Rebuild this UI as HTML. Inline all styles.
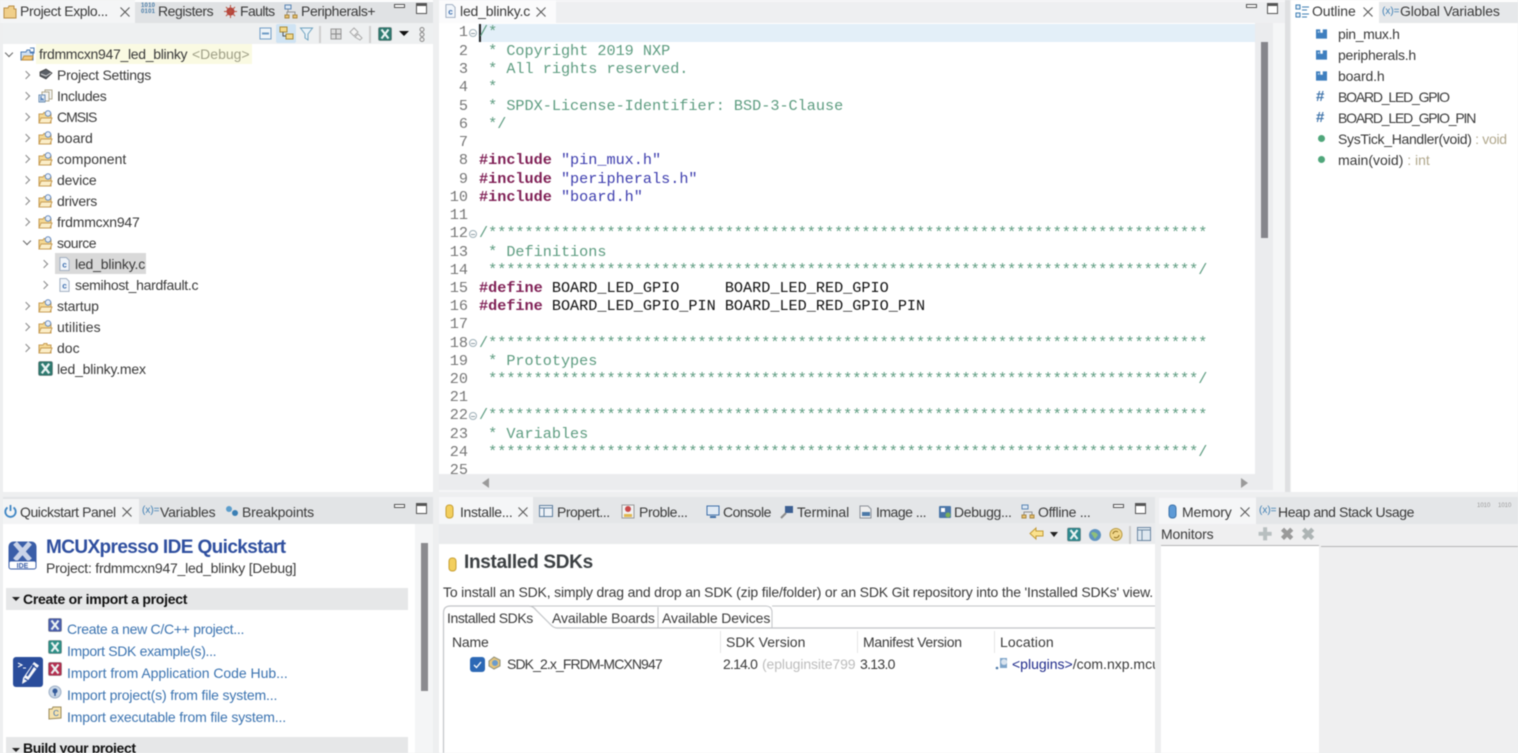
<!DOCTYPE html>
<html lang="en">
<head>
<meta charset="utf-8">
<title>MCUXpresso IDE</title>
<style>
html,body{margin:0;padding:0;background:#eeeff0;}
body{width:1518px;height:753px;overflow:hidden;position:relative;font-family:"Liberation Sans",sans-serif;color:#333;}
#w{position:absolute;left:0;top:0;width:1518px;height:753px;overflow:hidden;filter:blur(.4px);}
.b{position:absolute;}
.t{position:absolute;white-space:nowrap;font-size:14px;line-height:18px;color:#3a3a3a;}
.l{color:#3b73b0;}
.g{color:#b0a78c;}
.m{position:absolute;white-space:pre;font-family:"Liberation Mono",monospace;font-size:15.18px;line-height:18px;color:#111;left:479px;}
.c{color:#5d9c80;}
.k{color:#7f1f55;font-weight:bold;}
.s{color:#3d3dae;}
.n{position:absolute;width:26px;left:442px;text-align:right;font-family:"Liberation Mono",monospace;font-size:15.18px;line-height:18px;color:#777;}
.f{position:absolute;left:469px;width:6px;height:6px;border:1px solid #9fb0b8;border-radius:50%;}
.f:after{content:"";position:absolute;left:1px;top:2.500px;width:4px;height:1px;background:#8c9ca5;}
svg.i{position:absolute;overflow:visible;}
.ch{position:absolute;width:5px;height:5px;border-top:1.3px solid #8a8a8a;border-right:1.3px solid #8a8a8a;transform:rotate(45deg);}
.cd{position:absolute;width:5px;height:5px;border-bottom:1.3px solid #666;border-right:1.3px solid #666;transform:rotate(45deg);}
</style>
</head>
<body>
<div id="w">
<svg width="0" height="0" style="position:absolute">
<defs>
<symbol id="fo" viewBox="0 0 15 14"><path d="M1 13V4h4l1-1.500h3V4h4v9z" fill="#f4d894" stroke="#c79d55"/><path d="M1 13l2-5h11l-2 5z" fill="#fbeec8" stroke="#c79d55"/><circle cx="10" cy="3.500" r="2.800" fill="#e6eef8" stroke="#5b82b8" stroke-width=".9"/></symbol>
<symbol id="fd" viewBox="0 0 15 14"><path d="M1 12V4h4l1-1.500h3V4h4v8z" fill="#f4d894" stroke="#c79d55"/><path d="M1 12l2-5h11l-2 5z" fill="#fbeec8" stroke="#c79d55"/></symbol>
<symbol id="xb" viewBox="0 0 14 14"><rect x=".5" y=".5" width="13" height="13" rx="1.500" fill="currentColor" stroke="#333" stroke-opacity=".3"/><path d="M3.500 2.500L10.500 11.500M10.500 2.500L3.500 11.500" stroke="#e9f2f2" stroke-width="2.200"/></symbol>
<symbol id="cf" viewBox="0 0 12 15"><path d="M1 .5h7l3 3v11H1z" fill="#f1f5fa" stroke="#9aa9bd"/><text x="6" y="11.500" font-size="9" font-family="Liberation Sans" font-weight="bold" text-anchor="middle" fill="#3c6eaf">c</text></symbol>
<symbol id="inc" viewBox="0 0 13 11"><path d="M0 0h5v4h3v-4h5v11H0z" fill="#3f7fbf"/><rect x="2" y="2" width="2" height="2" fill="#a9cbe8"/></symbol>
<symbol id="cl" viewBox="0 0 10 10"><path d="M.5 .5L9.500 9.500M9.500 .5L.5 9.500" stroke="#555" stroke-width="1" fill="none"/></symbol>
</defs>
</svg>

<!-- TOP LEFT PANEL -->
<div class="b" style="left:3px;top:0;width:430px;height:492px;background:#fff"></div>
<div class="b" style="left:3px;top:2px;width:430px;height:21px;background:#e0e2e4"></div>
<div class="b" style="left:0;top:0;width:135px;height:23px;background:#f4f5f6"></div>
<div class="b" style="left:3px;top:23px;width:430px;height:21px;background:#eef0f1"></div>
<svg class="i" style="left:3px;top:5px" width="14" height="14" viewBox="0 0 14 14"><path d="M1 13V3h4l1-2h5v3h2v9z" fill="#f0cf8a" stroke="#b98e46"/></svg>
<span class="t" style="left:20px;top:2px;letter-spacing:-.4px">Project Explo...</span>
<svg class="i" style="left:120px;top:7px" width="10" height="10"><use href="#cl"/></svg>
<span class="t" style="left:141px;top:3px;font-size:6px;line-height:6px;color:#4a7da8;font-weight:bold;letter-spacing:.2px;white-space:pre">1010
0101</span>
<span class="t" style="left:158px;top:2px;letter-spacing:-.44px">Registers</span>
<svg class="i" style="left:224px;top:5px" width="13" height="13" viewBox="0 0 13 13"><circle cx="6.500" cy="6.500" r="4" fill="#b53a3a"/><path d="M6.500 0v13M0 6.500h13M2 2l9 9M11 2l-9 9" stroke="#b7513e" stroke-width="1"/></svg>
<span class="t" style="left:240px;top:2px;letter-spacing:-.6px">Faults</span>
<svg class="i" style="left:284px;top:4px" width="14" height="15" viewBox="0 0 14 15"><rect x="1" y="1" width="6" height="4" fill="#dce7f3" stroke="#5b85b3"/><path d="M4 5v3M3 11V8h8v3" stroke="#8f8f8f" fill="none"/><rect x="1" y="11" width="4" height="3" fill="#e8c170" stroke="#a98740"/><rect x="9" y="11" width="4" height="3" fill="#e8c170" stroke="#a98740"/></svg>
<span class="t" style="left:301px;top:2px;letter-spacing:-.4px">Peripherals+</span>
<div class="b" style="left:394px;top:4px;width:9px;height:2px;border:1.5px solid #555;background:#fff"></div>
<div class="b" style="left:416px;top:3px;width:9px;height:7px;border:1.5px solid #555;border-top-width:3px;background:#fff"></div>
<!-- toolbar -->
<div class="b" style="left:276px;top:24px;width:20px;height:19px;background:#cfe3f3;border-radius:2px"></div>
<svg class="i" style="left:259px;top:27px" width="14" height="14" viewBox="0 0 14 14"><rect x="1" y="1" width="11" height="11" fill="#eef3f8" stroke="#6f9cc6"/><path d="M3 6.500h7" stroke="#6f9cc6" stroke-width="2"/></svg>
<svg class="i" style="left:279px;top:26px" width="15" height="15" viewBox="0 0 15 15"><rect x="1" y="1" width="7" height="5" fill="#f3d98a" stroke="#a88b38"/><rect x="7" y="8" width="7" height="5" fill="#f3d98a" stroke="#a88b38"/><path d="M4 6v4h3" stroke="#555" fill="none"/></svg>
<svg class="i" style="left:300px;top:27px" width="13" height="14" viewBox="0 0 13 14"><path d="M.5 1h12L8 7v6L5 11V7z" fill="#e8f2f8" stroke="#6fa3c0"/></svg>
<div class="b" style="left:319px;top:26px;width:2px;height:17px;background:#cfcfcf"></div>
<svg class="i" style="left:330px;top:28px" width="12" height="12" viewBox="0 0 12 12"><rect x="1" y="1" width="10" height="10" fill="#ddd" stroke="#999"/><path d="M6 1v10M1 6h10" stroke="#888"/></svg>
<svg class="i" style="left:349px;top:27px" width="14" height="14" viewBox="0 0 14 14"><path d="M1 5l4-4 4 4-4 4zM6 10l3-3 4 4-2 2z" fill="#f4f4f4" stroke="#aaa"/></svg>
<div class="b" style="left:369px;top:26px;width:2px;height:17px;background:#cfcfcf"></div>
<svg class="i" style="left:378px;top:27px;color:#2e7a70" width="14" height="14"><use href="#xb"/></svg>
<div class="b" style="left:399px;top:31px;border:5px solid transparent;border-top:5px solid #111;border-bottom:0"></div>
<svg class="i" style="left:419px;top:27px" width="6" height="15" viewBox="0 0 6 15"><circle cx="3" cy="2.500" r="2" fill="#eee" stroke="#888"/><circle cx="3" cy="7.500" r="2" fill="#eee" stroke="#888"/><circle cx="3" cy="12.500" r="2" fill="#eee" stroke="#888"/></svg>
<!-- tree -->
<div class="b" style="left:36px;top:44px;width:216px;height:20px;background:#fafae2"></div>
<div class="cd" style="left:6px;top:50px"></div>
<svg class="i" style="left:20px;top:47px" width="15" height="14" viewBox="0 0 15 14"><path d="M1 13V5h5l1-2h3v2h3v8z" fill="#cfe0f2" stroke="#4f7db5"/><path d="M2 13l2-4h9l-1 4z" fill="#f2c778" stroke="#bf9040"/><path d="M10 1h4v5h-4" fill="none" stroke="#4f7db5"/></svg>
<span class="t" style="left:39px;top:45px;letter-spacing:-.3px">frdmmcxn947_led_blinky</span>
<span class="t" style="left:192px;top:45px;color:#9f9f86">&lt;Debug&gt;</span>

<div class="ch" style="left:23px;top:72px"></div>
<svg class="i" style="left:39px;top:68px" width="14" height="13" viewBox="0 0 14 13"><path d="M1 4l6-3 6 4-6 6-6-3z" fill="#5a5f66" stroke="#333" stroke-width=".7"/><path d="M2 6l5 2 5-3" stroke="#ddd" fill="none"/></svg>
<span class="t" style="left:57px;top:66px;letter-spacing:-.25px">Project Settings</span>

<div class="ch" style="left:23px;top:93px"></div>
<svg class="i" style="left:38px;top:89px" width="15" height="14" viewBox="0 0 15 14"><rect x="7" y="1" width="7" height="9" fill="#f4f4f4" stroke="#b0a88e"/><rect x="4" y="3" width="7" height="9" fill="#f4f4f4" stroke="#b0a88e"/><rect x="1" y="6" width="6" height="7" fill="#e3ecf6" stroke="#6d8fb3"/><path d="M3 7v5M3 10h2v2" stroke="#3c6eaf" fill="none"/></svg>
<span class="t" style="left:57px;top:87px;letter-spacing:-.35px">Includes</span>

<div class="ch" style="left:23px;top:114px"></div><svg class="i" style="left:38px;top:110px" width="15" height="14"><use href="#fo"/></svg><span class="t" style="left:57px;top:108px;letter-spacing:-1px">CMSIS</span>
<div class="ch" style="left:23px;top:135px"></div><svg class="i" style="left:38px;top:131px" width="15" height="14"><use href="#fo"/></svg><span class="t" style="left:57px;top:129px">board</span>
<div class="ch" style="left:23px;top:156px"></div><svg class="i" style="left:38px;top:152px" width="15" height="14"><use href="#fo"/></svg><span class="t" style="left:57px;top:150px">component</span>
<div class="ch" style="left:23px;top:177px"></div><svg class="i" style="left:38px;top:173px" width="15" height="14"><use href="#fo"/></svg><span class="t" style="left:57px;top:171px;letter-spacing:-.15px">device</span>
<div class="ch" style="left:23px;top:198px"></div><svg class="i" style="left:38px;top:194px" width="15" height="14"><use href="#fo"/></svg><span class="t" style="left:57px;top:192px;letter-spacing:-.3px">drivers</span>
<div class="ch" style="left:23px;top:219px"></div><svg class="i" style="left:38px;top:215px" width="15" height="14"><use href="#fo"/></svg><span class="t" style="left:57px;top:213px;letter-spacing:-.2px">frdmmcxn947</span>
<div class="cd" style="left:24px;top:238px"></div><svg class="i" style="left:38px;top:236px" width="15" height="14"><use href="#fo"/></svg><span class="t" style="left:57px;top:234px;letter-spacing:-.5px">source</span>

<div class="b" style="left:55px;top:253px;width:91px;height:21px;background:#d9d9d9"></div>
<div class="ch" style="left:41px;top:261px"></div><svg class="i" style="left:59px;top:257px" width="11" height="14"><use href="#cf"/></svg><span class="t" style="left:75px;top:255px;letter-spacing:-.17px">led_blinky.c</span>
<div class="ch" style="left:41px;top:282px"></div><svg class="i" style="left:59px;top:278px" width="11" height="14"><use href="#cf"/></svg><span class="t" style="left:75px;top:276px;letter-spacing:-.3px">semihost_hardfault.c</span>

<div class="ch" style="left:23px;top:303px"></div><svg class="i" style="left:38px;top:299px" width="15" height="14"><use href="#fo"/></svg><span class="t" style="left:57px;top:297px;letter-spacing:-.15px">startup</span>
<div class="ch" style="left:23px;top:324px"></div><svg class="i" style="left:38px;top:320px" width="15" height="14"><use href="#fo"/></svg><span class="t" style="left:57px;top:318px;letter-spacing:.1px">utilities</span>
<div class="ch" style="left:23px;top:345px"></div><svg class="i" style="left:38px;top:341px" width="15" height="14"><use href="#fd"/></svg><span class="t" style="left:57px;top:339px">doc</span>
<svg class="i" style="left:38px;top:361px;color:#2e7a70" width="15" height="15"><use href="#xb"/></svg><span class="t" style="left:57px;top:360px;letter-spacing:-.2px">led_blinky.mex</span>

<!-- EDITOR -->
<div class="b" style="left:439px;top:0;width:846px;height:492px;background:#f5f6f7"></div>
<div class="b" style="left:439px;top:2px;width:846px;height:21px;background:#eeeff1"></div>
<div class="b" style="left:439px;top:0;width:117px;height:23px;background:#fbfbfc"></div>
<div class="b" style="left:439px;top:23px;width:816px;height:451px;background:#fff"></div>
<div class="b" style="left:478px;top:24px;width:777px;height:18px;background:#e3eff8"></div>
<div class="b" style="left:1255px;top:23px;width:18px;height:451px;background:#ebecee"></div>
<div class="b" style="left:1261px;top:42px;width:7px;height:196px;background:#86868c"></div>
<div class="b" style="left:439px;top:474px;width:834px;height:16px;background:#ebecee"></div>
<div class="b" style="left:482px;top:478px;border:5px solid transparent;border-right:7px solid #9a9a9a;border-left:0"></div>
<div class="b" style="left:1241px;top:478px;border:5px solid transparent;border-left:7px solid #9a9a9a;border-right:0"></div>
<div class="b" style="left:1285px;top:0;width:5px;height:492px;background:#dfe0e2"></div>
<svg class="i" style="left:445px;top:4px" width="11" height="14"><use href="#cf"/></svg>
<span class="t" style="left:460px;top:2px;letter-spacing:-.17px">led_blinky.c</span>
<svg class="i" style="left:536px;top:7px" width="10" height="10"><use href="#cl"/></svg>
<div class="b" style="left:1246px;top:4px;width:9px;height:2px;border:1.5px solid #555;background:#fff"></div>
<div class="b" style="left:1267px;top:3px;width:9px;height:7px;border:1.5px solid #555;border-top-width:3px;background:#fff"></div>
<div class="b" style="left:479px;top:24px;width:2px;height:18px;background:#222"></div>

<div class="n" style="top:23px">1</div><div class="f" style="top:29px"></div>
<div class="n" style="top:42px">2</div><div class="n" style="top:60px">3</div><div class="n" style="top:78px">4</div><div class="n" style="top:97px">5</div><div class="n" style="top:115px">6</div><div class="n" style="top:133px">7</div><div class="n" style="top:151px">8</div><div class="n" style="top:170px">9</div><div class="n" style="top:188px">10</div><div class="n" style="top:206px">11</div>
<div class="n" style="top:224px">12</div><div class="f" style="top:230px"></div>
<div class="n" style="top:243px">13</div><div class="n" style="top:261px">14</div><div class="n" style="top:279px">15</div><div class="n" style="top:297px">16</div><div class="n" style="top:315px">17</div>
<div class="n" style="top:334px">18</div><div class="f" style="top:339px"></div>
<div class="n" style="top:352px">19</div><div class="n" style="top:370px">20</div><div class="n" style="top:388px">21</div>
<div class="n" style="top:406px">22</div><div class="f" style="top:412px"></div>
<div class="n" style="top:425px">23</div><div class="n" style="top:443px">24</div><div class="n" style="top:461px;height:13px;overflow:hidden">25</div>

<div class="m c" style="top:23px">/*</div>
<div class="m c" style="top:42px"> * Copyright 2019 NXP</div>
<div class="m c" style="top:60px"> * All rights reserved.</div>
<div class="m c" style="top:78px"> *</div>
<div class="m c" style="top:97px"> * SPDX-License-Identifier: BSD-3-Clause</div>
<div class="m c" style="top:115px"> */</div>
<div class="m" style="top:151px"><span class="k">#include</span> <span class="s">"pin_mux.h"</span></div>
<div class="m" style="top:170px"><span class="k">#include</span> <span class="s">"peripherals.h"</span></div>
<div class="m" style="top:188px"><span class="k">#include</span> <span class="s">"board.h"</span></div>
<div class="m c" style="top:224px">/*******************************************************************************</div>
<div class="m c" style="top:243px"> * Definitions</div>
<div class="m c" style="top:261px"> ******************************************************************************/</div>
<div class="m" style="top:279px"><span class="k">#define</span> BOARD_LED_GPIO     BOARD_LED_RED_GPIO</div>
<div class="m" style="top:297px"><span class="k">#define</span> BOARD_LED_GPIO_PIN BOARD_LED_RED_GPIO_PIN</div>
<div class="m c" style="top:334px">/*******************************************************************************</div>
<div class="m c" style="top:352px"> * Prototypes</div>
<div class="m c" style="top:370px"> ******************************************************************************/</div>
<div class="m c" style="top:406px">/*******************************************************************************</div>
<div class="m c" style="top:425px"> * Variables</div>
<div class="m c" style="top:443px"> ******************************************************************************/</div>

<!-- OUTLINE -->
<div class="b" style="left:1291px;top:0;width:227px;height:492px;background:#fff"></div>
<div class="b" style="left:1379px;top:2px;width:139px;height:21px;background:#e6e8ea"></div>
<svg class="i" style="left:1295px;top:4px" width="14" height="14" viewBox="0 0 14 14"><path d="M1 1h4v4H1zM1 9h4v4H1z" fill="#e7f0f8" stroke="#3f7fb4"/><path d="M7 3h7M7 6h5M7 10h7M7 13h5" stroke="#3f7fb4"/></svg>
<span class="t" style="left:1312px;top:2px;letter-spacing:-.1px">Outline</span>
<svg class="i" style="left:1363px;top:7px" width="10" height="10"><use href="#cl"/></svg>
<span class="t" style="left:1382px;top:3px;font-size:10px;color:#3f7fb4">(x)=</span>
<span class="t" style="left:1400px;top:2px;letter-spacing:-.12px">Global Variables</span>
<svg class="i" style="left:1316px;top:29px" width="11" height="10"><use href="#inc"/></svg><span class="t" style="left:1338px;top:25px;letter-spacing:-.33px">pin_mux.h</span>
<svg class="i" style="left:1316px;top:50px" width="11" height="10"><use href="#inc"/></svg><span class="t" style="left:1338px;top:46px;letter-spacing:-.23px">peripherals.h</span>
<svg class="i" style="left:1316px;top:71px" width="11" height="10"><use href="#inc"/></svg><span class="t" style="left:1338px;top:67px;letter-spacing:-.14px">board.h</span>
<span class="t" style="left:1316px;top:88px;font-weight:bold;font-size:15px;color:#3f74ab">#</span><span class="t" style="left:1338px;top:88px;letter-spacing:-1.2px">BOARD_LED_GPIO</span>
<span class="t" style="left:1316px;top:109px;font-weight:bold;font-size:15px;color:#3f74ab">#</span><span class="t" style="left:1338px;top:109px;letter-spacing:-1.2px">BOARD_LED_GPIO_PIN</span>
<div class="b" style="left:1318px;top:135px;width:7px;height:7px;border-radius:50%;background:#4fa67a"></div><span class="t" style="left:1338px;top:130px;letter-spacing:-.32px">SysTick_Handler(void)<span class="g"> : void</span></span>
<div class="b" style="left:1318px;top:156px;width:7px;height:7px;border-radius:50%;background:#4fa67a"></div><span class="t" style="left:1338px;top:151px">main(void)<span class="g"> : int</span></span>

<!-- BOTTOM LEFT -->
<div class="b" style="left:3px;top:497px;width:430px;height:256px;background:#fff"></div>
<div class="b" style="left:3px;top:497px;width:430px;height:27px;background:#e2e4e6"></div>
<div class="b" style="left:3px;top:499px;width:136px;height:25px;background:#f3f4f5"></div>
<div class="b" style="left:415px;top:524px;width:18px;height:229px;background:#f4f5f6"></div>
<div class="b" style="left:421px;top:543px;width:7px;height:148px;background:#8b8b8f"></div>
<svg class="i" style="left:4px;top:504px" width="13" height="14" viewBox="0 0 13 14"><path d="M3.500 3.500a5.200 5.200 0 1 0 6 0" fill="none" stroke="#3f86c4" stroke-width="1.800"/><path d="M6.500 1v6" stroke="#3f86c4" stroke-width="1.800"/></svg>
<span class="t" style="left:20px;top:503px;letter-spacing:-.44px">Quickstart Panel</span>
<svg class="i" style="left:122px;top:507px" width="10" height="10"><use href="#cl"/></svg>
<span class="t" style="left:142px;top:502px;font-size:10px;color:#3f7fb4">(x)=</span>
<span class="t" style="left:160px;top:503px;letter-spacing:-.22px">Variables</span>
<svg class="i" style="left:225px;top:505px" width="14" height="12" viewBox="0 0 14 12"><circle cx="4" cy="4" r="3" fill="#5b9dcc"/><circle cx="10" cy="8" r="3" fill="#3b7fb4"/></svg>
<span class="t" style="left:242px;top:503px;letter-spacing:-.18px">Breakpoints</span>
<div class="b" style="left:394px;top:504px;width:9px;height:2px;border:1.5px solid #555;background:#fff"></div>
<div class="b" style="left:416px;top:503px;width:9px;height:7px;border:1.5px solid #555;border-top-width:3px;background:#fff"></div>

<svg class="i" style="left:8px;top:541px" width="29" height="29" viewBox="0 0 29 29"><rect x=".5" y=".5" width="28" height="28" rx="5" fill="#3a5ea8"/><path d="M7 2l15 17M22 2L7 19" stroke="#c9d3e8" stroke-width="5"/><rect x="1" y="20" width="27" height="8" fill="#fff" rx="2" stroke="#3a5ea8"/><text x="14.500" y="27" font-size="7" font-weight="bold" font-family="Liberation Sans" text-anchor="middle" fill="#3a5ea8">IDE</text></svg>
<span class="t" style="left:46px;top:537px;font-size:19px;line-height:22px;font-weight:bold;color:#2f4f9f;letter-spacing:-.6px">MCUXpresso IDE Quickstart</span>
<span class="t" style="left:46px;top:559px;letter-spacing:-.23px">Project: frdmmcxn947_led_blinky [Debug]</span>
<div class="b" style="left:6px;top:588px;width:402px;height:22px;background:#e6e7e8"></div>
<div class="b" style="left:12px;top:597px;border:4px solid transparent;border-top:4px solid #222;border-bottom:0"></div>
<span class="t" style="left:23px;top:590px;font-weight:bold;color:#111;letter-spacing:-.27px">Create or import a project</span>

<svg class="i" style="left:13px;top:657px" width="30" height="30" viewBox="0 0 30 30"><rect width="30" height="30" rx="3" fill="#2a4d9b"/><path d="M5 6l4 2-4 2M10 11h3" stroke="#fff" fill="none"/><path d="M9 27l1-6L21 5l5 3.500-11 15z" fill="#fff" opacity=".95"/><path d="M11.500 21.500l4 2.500M19 8l5 3.500" stroke="#2a4d9b" stroke-width="1.200"/><path d="M14 19l7-11" stroke="#2a4d9b" stroke-width="2"/></svg>
<svg class="i" style="left:48px;top:618px;color:#4a5fae" width="14" height="14"><use href="#xb"/></svg><span class="t l" style="left:67px;top:620px;letter-spacing:-.28px">Create a new C/C++ project...</span>
<svg class="i" style="left:48px;top:640px;color:#2f9088" width="14" height="14"><use href="#xb"/></svg><span class="t l" style="left:67px;top:642px;letter-spacing:-.33px">Import SDK example(s)...</span>
<svg class="i" style="left:48px;top:662px;color:#b52f50" width="14" height="14"><use href="#xb"/></svg><span class="t l" style="left:67px;top:664px;letter-spacing:-.03px">Import from Application Code Hub...</span>
<svg class="i" style="left:48px;top:685px" width="14" height="14" viewBox="0 0 14 14"><circle cx="7" cy="7" r="6" fill="#c9d6e6" stroke="#9eb0c6"/><circle cx="7" cy="6" r="2.500" fill="#345b9a"/><path d="M7 8v3" stroke="#345b9a" stroke-width="1.500"/></svg><span class="t l" style="left:67px;top:686px;letter-spacing:-.14px">Import project(s) from file system...</span>
<svg class="i" style="left:48px;top:706px" width="15" height="14" viewBox="0 0 15 14"><path d="M1 13V3l3 0 1-2h8v11z" fill="#f5e2ad" stroke="#9c8b5a"/><text x="8" y="10" font-size="8" font-family="Liberation Sans" text-anchor="middle" fill="#3c6eaf">C</text></svg><span class="t l" style="left:67px;top:708px;letter-spacing:-.16px">Import executable from file system...</span>
<div class="b" style="left:6px;top:737px;width:402px;height:16px;background:#e6e7e8"></div>
<div class="b" style="left:12px;top:748px;border:4px solid transparent;border-top:4px solid #222;border-bottom:0"></div>
<span class="t" style="left:23px;top:739px;font-weight:bold;color:#111;letter-spacing:-.4px">Build your project</span>

<!-- BOTTOM MIDDLE -->
<div class="b" style="left:439px;top:497px;width:716px;height:256px;background:#fff"></div>
<div class="b" style="left:439px;top:497px;width:716px;height:47px;background:#eaebed"></div>
<div class="b" style="left:439px;top:497px;width:94px;height:27px;background:#f5f6f7"></div>
<div class="b" style="left:533px;top:497px;width:622px;height:26px;background:#e4e6e8"></div>
<svg class="i" style="left:445px;top:504px" width="9" height="15" viewBox="0 0 9 15"><rect x="1" y="1" width="7" height="13" rx="3" fill="#f3cf5e" stroke="#c79f32"/></svg>
<span class="t" style="left:460px;top:503px;letter-spacing:-.33px">Installe...</span>
<svg class="i" style="left:518px;top:507px" width="10" height="10"><use href="#cl"/></svg>
<svg class="i" style="left:539px;top:505px" width="14" height="12" viewBox="0 0 14 12"><rect x=".5" y=".5" width="13" height="11" fill="#eef2f7" stroke="#5f7f9f"/><path d="M1 3h12M5 3v8" stroke="#5f7f9f"/></svg>
<span class="t" style="left:557px;top:503px;letter-spacing:-.5px">Propert...</span>
<svg class="i" style="left:621px;top:504px" width="14" height="15" viewBox="0 0 14 15"><rect x="1" y="1" width="12" height="13" fill="#f2f2f2" stroke="#999"/><circle cx="7" cy="5" r="3" fill="#c94a4a"/><rect x="3" y="10" width="8" height="3" fill="#e0b84f"/></svg>
<span class="t" style="left:639px;top:503px;letter-spacing:-.4px">Proble...</span>
<svg class="i" style="left:706px;top:505px" width="14" height="13" viewBox="0 0 14 13"><rect x="1" y="1" width="12" height="9" fill="#dfe9f4" stroke="#3f6fa8"/><path d="M4 12h6" stroke="#3f6fa8" stroke-width="2"/></svg>
<span class="t" style="left:723px;top:503px;letter-spacing:-.5px">Console</span>
<svg class="i" style="left:780px;top:505px" width="14" height="14" viewBox="0 0 14 14"><rect x="5" y="1" width="8" height="7" fill="#3c5f92"/><path d="M1 13l5-5" stroke="#8a8a8a" stroke-width="2"/></svg>
<span class="t" style="left:797px;top:503px;letter-spacing:-.1px">Terminal</span>
<svg class="i" style="left:859px;top:505px" width="14" height="14" viewBox="0 0 14 14"><path d="M1 1h8l3 3v9H1z" fill="#eee" stroke="#8a8f96"/><rect x="3" y="7" width="8" height="4" fill="#4d79a8"/></svg>
<span class="t" style="left:876px;top:503px;letter-spacing:-.5px">Image ...</span>
<svg class="i" style="left:938px;top:505px" width="14" height="14" viewBox="0 0 14 14"><rect x="1" y="1" width="12" height="12" rx="1" fill="#4a76a8"/><rect x="3" y="3" width="4" height="4" fill="#fff"/><circle cx="10" cy="10" r="2.500" fill="#7bb05a"/></svg>
<span class="t" style="left:954px;top:503px;letter-spacing:-.35px">Debugg...</span>
<svg class="i" style="left:1021px;top:504px" width="14" height="15" viewBox="0 0 14 15"><rect x="1" y="1" width="6" height="4" fill="#dce7f3" stroke="#5b85b3"/><path d="M3 11V8h8v3" stroke="#8f8f8f" fill="none"/><rect x="1" y="11" width="4" height="3" fill="#e8c170" stroke="#a98740"/><rect x="9" y="11" width="4" height="3" fill="#e8c170" stroke="#a98740"/></svg>
<span class="t" style="left:1038px;top:503px;letter-spacing:-.3px">Offline ...</span>
<div class="b" style="left:1113px;top:504px;width:9px;height:2px;border:1.5px solid #555;background:#fff"></div>
<div class="b" style="left:1135px;top:503px;width:9px;height:7px;border:1.5px solid #555;border-top-width:3px;background:#fff"></div>
<!-- toolbar -->
<svg class="i" style="left:1029px;top:527px" width="15" height="13" viewBox="0 0 15 13"><path d="M1 6.500L7 1v3h7v5H7v3z" fill="#fbe28e" stroke="#c39a35"/></svg>
<div class="b" style="left:1050px;top:532px;border:4.500px solid transparent;border-top:5px solid #222;border-bottom:0"></div>
<svg class="i" style="left:1067px;top:527px;color:#2e8a90" width="14" height="15"><use href="#xb"/></svg>
<svg class="i" style="left:1088px;top:528px" width="14" height="14" viewBox="0 0 14 14"><circle cx="7" cy="7" r="6" fill="#5f93bf"/><path d="M3 5c2-2 5-1 7 2l-3 4z" fill="#8fbf7a"/></svg>
<svg class="i" style="left:1109px;top:527px" width="14" height="15" viewBox="0 0 14 15"><circle cx="7" cy="7.500" r="6" fill="#f1d78b" stroke="#b99a40"/><path d="M4 7a3 3 0 0 1 5-2M10 8a3 3 0 0 1-5 2" stroke="#8d6e1f" fill="none"/></svg>
<div class="b" style="left:1129px;top:526px;width:2px;height:18px;background:#cfcfcf"></div>
<svg class="i" style="left:1137px;top:527px" width="14" height="14" viewBox="0 0 14 14"><rect x=".5" y=".5" width="13" height="13" fill="#dfe8f0" stroke="#6b87a3"/><path d="M1 3h12M5 3v10" stroke="#6b87a3"/></svg>

<svg class="i" style="left:447px;top:555px" width="11" height="17" viewBox="0 0 11 17"><rect x="2" y="3" width="7" height="13" rx="3" fill="#f3cf5e" stroke="#c79f32"/></svg>
<span class="t" style="left:464px;top:552px;font-size:19px;line-height:22px;font-weight:bold;color:#3c4043;letter-spacing:-.3px">Installed SDKs</span>
<span class="t" style="left:443px;top:583px;letter-spacing:-.17px">To install an SDK, simply drag and drop an SDK (zip file/folder) or an SDK Git repository into the 'Installed SDKs' view.</span>
<svg class="i" style="left:443px;top:604px" width="712" height="149" viewBox="0 0 712 149"><path d="M.5 149V9q0-7 7-7H86q4 0 7 4l15 15q3 3 6 3H712" fill="none" stroke="#c2c4c7" stroke-width="1.200"/><path d="M86 2H323q5 0 6 5V24M215 3V24M712 2H329" fill="none" stroke="#c2c4c7"/></svg>
<span class="t" style="left:447px;top:609px;letter-spacing:-.43px">Installed SDKs</span>
<span class="t" style="left:552px;top:609px;letter-spacing:-.13px">Available Boards</span>
<span class="t" style="left:662px;top:609px;letter-spacing:-.12px">Available Devices</span>
<span class="t" style="left:452px;top:633px;letter-spacing:-.2px">Name</span>
<div class="b" style="left:720px;top:631px;width:1px;height:22px;background:#e6e6e6"></div>
<span class="t" style="left:726px;top:633px">SDK Version</span>
<div class="b" style="left:857px;top:631px;width:1px;height:22px;background:#e6e6e6"></div>
<span class="t" style="left:863px;top:633px;letter-spacing:-.3px">Manifest Version</span>
<div class="b" style="left:994px;top:631px;width:1px;height:22px;background:#e6e6e6"></div>
<span class="t" style="left:1000px;top:633px;letter-spacing:.1px">Location</span>
<div class="b" style="left:470px;top:657px;width:15px;height:15px;background:#2c68b5;border-radius:3px"></div>
<svg class="i" style="left:470px;top:657px" width="15" height="15" viewBox="0 0 15 15"><path d="M4 8l2.500 2.500L11 5" fill="none" stroke="#fff" stroke-width="1.300"/></svg>
<svg class="i" style="left:488px;top:656px" width="14" height="14" viewBox="0 0 14 14"><path d="M1 5l5-4 6 3v6l-6 3-5-3z" fill="#e8c67a" stroke="#8f8f7a"/><circle cx="7" cy="7" r="3" fill="#6b9bcc"/></svg>
<span class="t" style="left:507px;top:655px;letter-spacing:-.9px">SDK_2.x_FRDM-MCXN947</span>
<span class="t" style="left:723px;top:655px;letter-spacing:-.8px">2.14.0</span>
<span class="t" style="left:762px;top:655px;color:#bdbdbd;letter-spacing:-.1px">(epluginsite799</span>
<span class="t" style="left:860px;top:655px;letter-spacing:-.7px">3.13.0</span>
<svg class="i" style="left:995px;top:656px" width="14" height="14" viewBox="0 0 14 14"><path d="M5 2h7v10H5z" fill="#7ea4c9"/><circle cx="9" cy="6" r="3" fill="#d8e3ee"/><circle cx="2" cy="12" r="1.300" fill="#4d79a8"/></svg>
<div class="t" style="left:1012px;top:655px;width:143px;overflow:hidden"><span style="color:#1e2a8a">&lt;plugins&gt;</span>/com.nxp.mcuxpresso</div>

<!-- BOTTOM RIGHT -->
<div class="b" style="left:1159px;top:497px;width:359px;height:256px;background:#efeff0"></div>
<div class="b" style="left:1256px;top:497px;width:262px;height:27px;background:#e4e6e8"></div>
<div class="b" style="left:1159px;top:498px;width:97px;height:26px;background:#f5f6f7"></div>
<div class="b" style="left:1161px;top:546px;width:158px;height:207px;background:#fff"></div>
<div class="b" style="left:1161px;top:545px;width:158px;height:1px;background:#b5b5b5"></div>
<div class="b" style="left:1321px;top:546px;width:197px;height:1px;background:#b5b5b5"></div>
<svg class="i" style="left:1168px;top:504px" width="9" height="15" viewBox="0 0 9 15"><rect x="1" y="1" width="7" height="13" rx="3" fill="#5d9ad6" stroke="#3c72aa"/></svg>
<span class="t" style="left:1182px;top:503px;letter-spacing:-.15px">Memory</span>
<svg class="i" style="left:1240px;top:507px" width="10" height="10"><use href="#cl"/></svg>
<span class="t" style="left:1259px;top:502px;font-size:10px;color:#3f7fb4">(x)=</span>
<span class="t" style="left:1278px;top:503px;letter-spacing:-.4px">Heap and Stack Usage</span>
<span class="t" style="left:1477px;top:503px;font-size:6px;line-height:7px;color:#999;white-space:pre">1010</span>
<span class="t" style="left:1498px;top:503px;font-size:6px;line-height:7px;color:#999;white-space:pre">1010</span>
<span class="t" style="left:1161px;top:525px;letter-spacing:-.15px">Monitors</span>
<span class="t" style="left:1258px;top:526px;font-size:17px;font-weight:bold;color:#b8bfc0">✚</span>
<span class="t" style="left:1280px;top:526px;font-size:17px;font-weight:bold;color:#9a9a9a">✖</span>
<span class="t" style="left:1301px;top:526px;font-size:17px;font-weight:bold;color:#adb4b4">✖</span>
</div>
</body>
</html>
